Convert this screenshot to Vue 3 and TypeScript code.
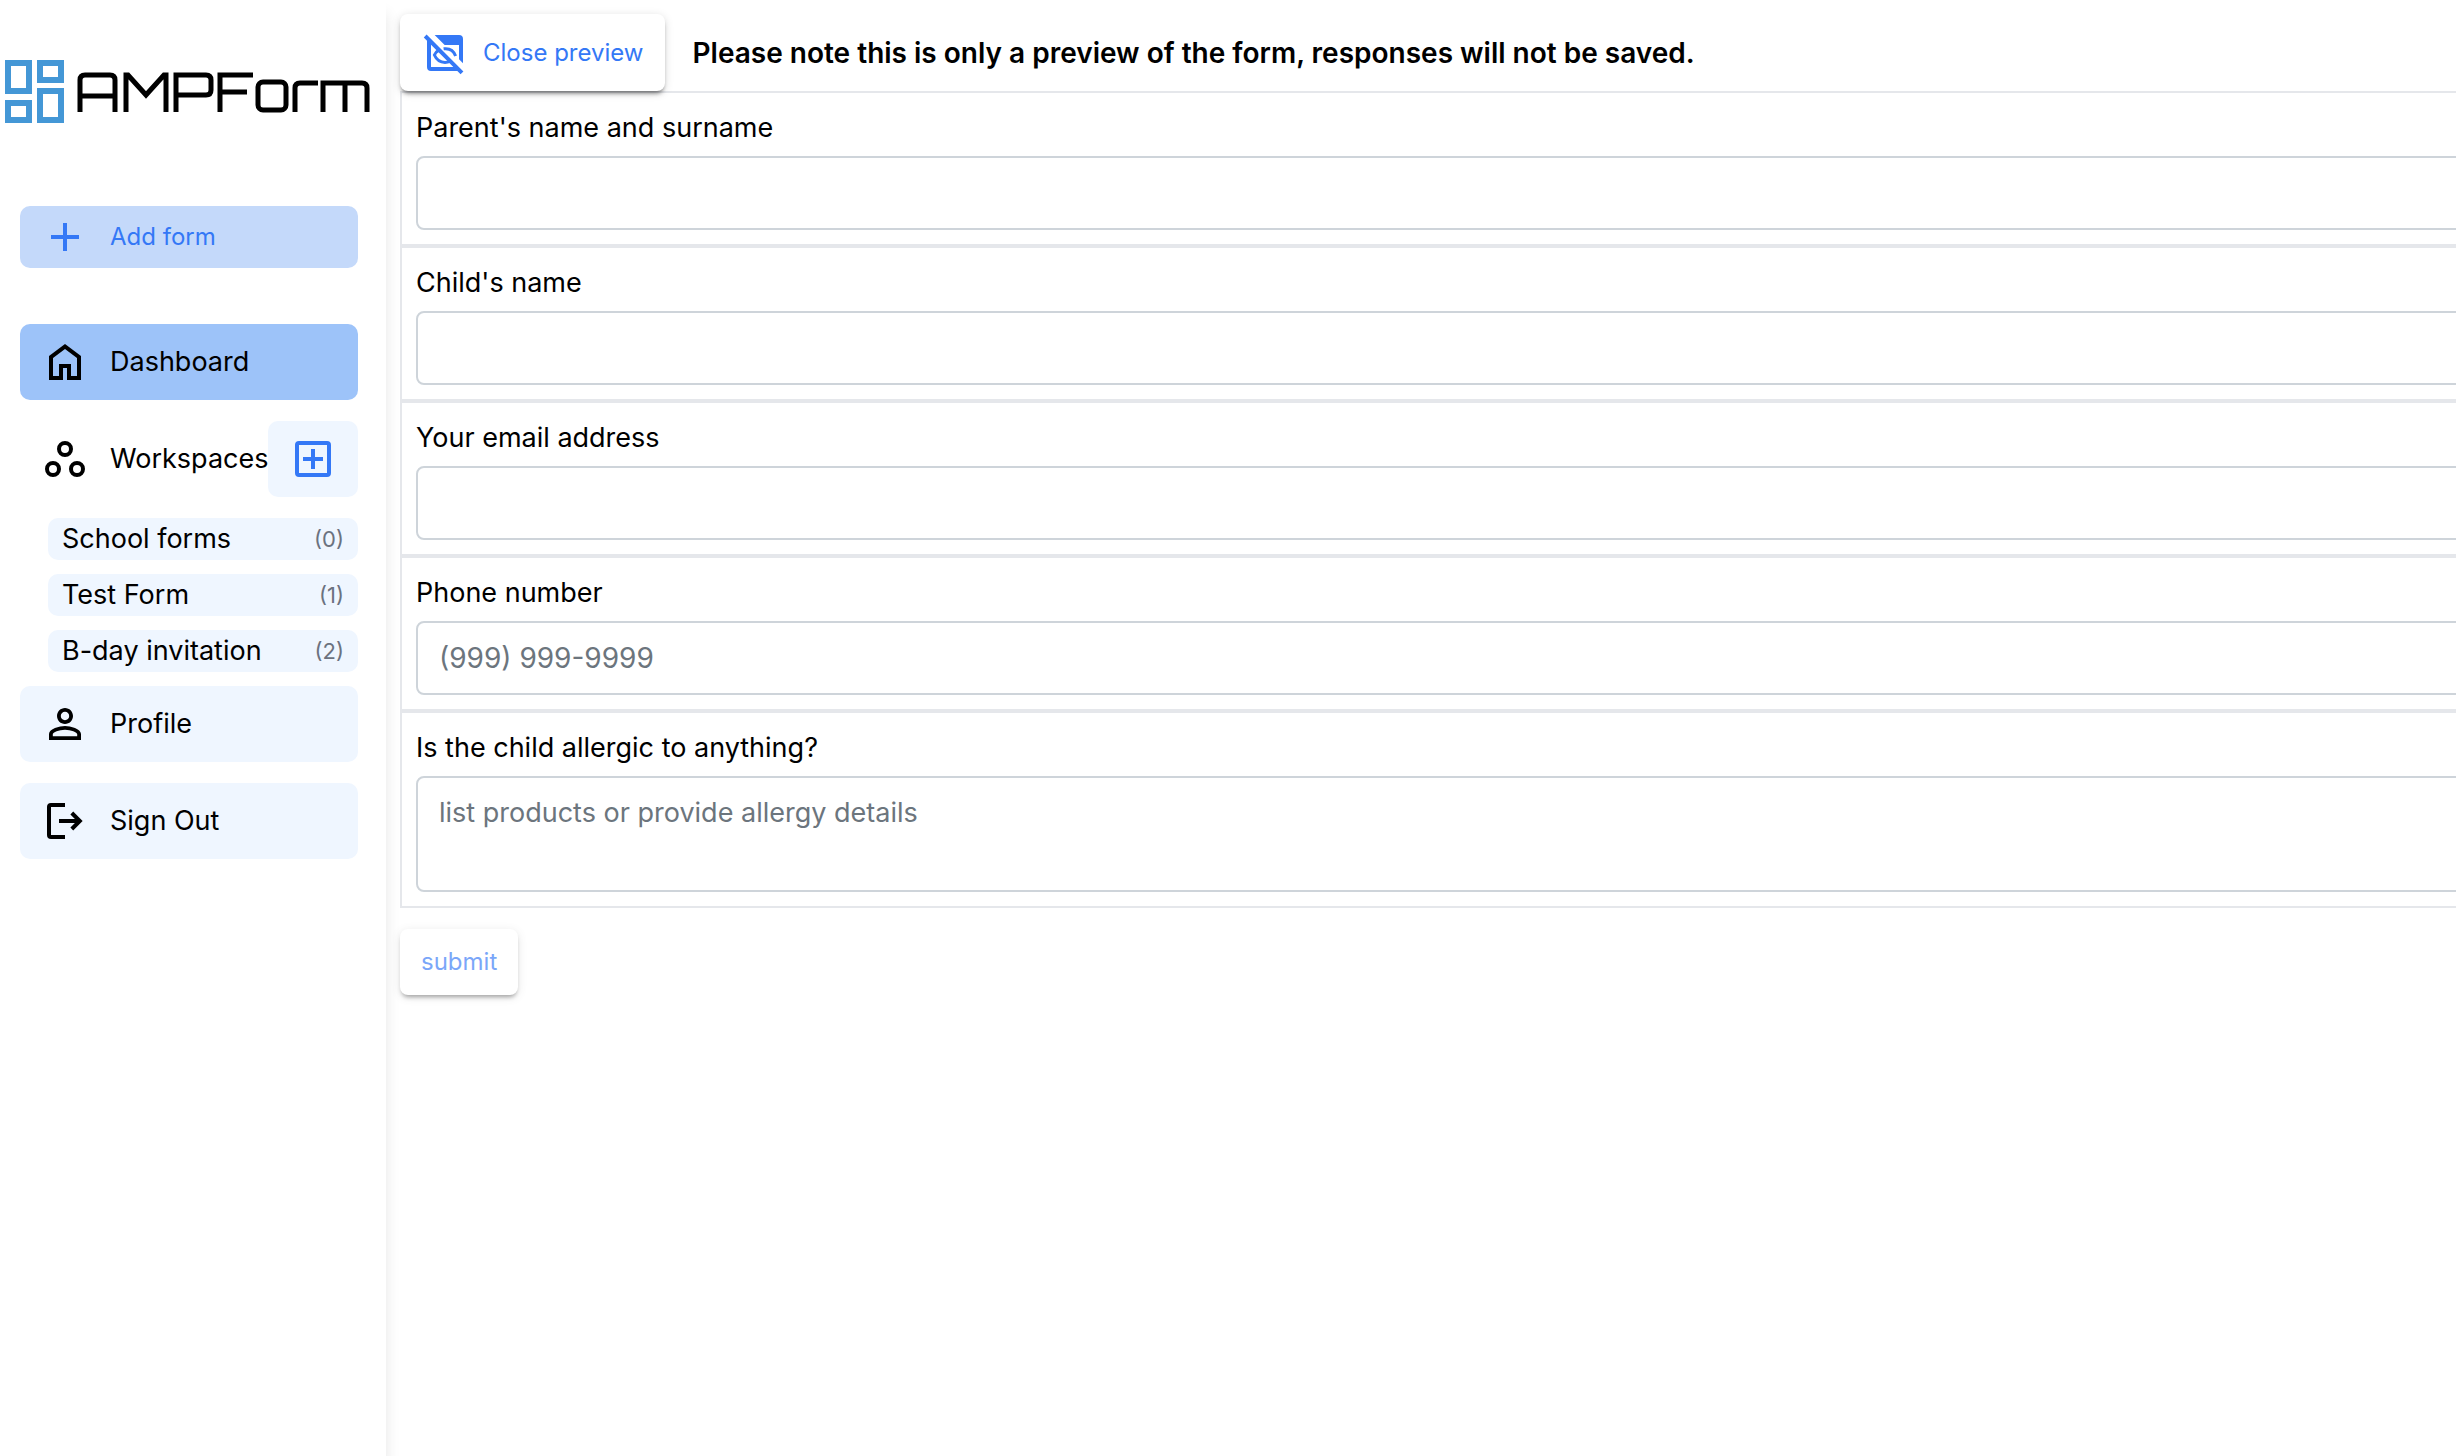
<script setup lang="ts">
import { ref } from 'vue'

interface Workspace {
  name: string
  count: number
}
interface Field {
  id: string
  label: string
  kind: 'text' | 'email' | 'tel' | 'textarea'
  placeholder?: string
}

const workspaces: Workspace[] = [
  { name: 'School forms', count: 0 },
  { name: 'Test Form', count: 1 },
  { name: 'B-day invitation', count: 2 },
]

const fields: Field[] = [
  { id: 'parent', label: "Parent's name and surname", kind: 'text' },
  { id: 'child', label: "Child's name", kind: 'text' },
  { id: 'email', label: 'Your email address', kind: 'email' },
  { id: 'phone', label: 'Phone number', kind: 'tel', placeholder: '(999) 999-9999' },
  {
    id: 'allergy',
    label: 'Is the child allergic to anything?',
    kind: 'textarea',
    placeholder: 'list products or provide allergy details',
  },
]

const answers = ref<Record<string, string>>({})
</script>

<template>
  <div class="app">
    <aside class="sidebar">
      <a class="logo" href="#" aria-label="AMPForm">
        <svg viewBox="0 0 374 64" fill="none">
          <g stroke="#4497d6" stroke-width="6">
            <path d="M8 3h21v28H8zM40 3h21v17H40zM8 43h21v17H8zM40 31h21v29H40z" />
          </g>
          <g stroke="#000" stroke-width="5">
            <path d="M80 52V20q0-5 5-5h25q5 0 5 5v32M80 36h35" />
            <path d="M126 52V15h2l18 20 18-20h2v37" />
            <path d="M176 52V15h30q5 0 5 5v10q0 5-5 5h-30" />
            <path d="M253 15h-33v37M220 32h27" />
            <rect x="258" y="22" width="28" height="28" rx="5" />
            <path d="M295 52V28q0-5 5-5h18" />
            <path d="M323 52V23h39q5 0 5 5v24M345 23v29" />
          </g>
        </svg>
      </a>

      <button class="item add" type="button">
        <svg class="icon" viewBox="0 0 24 24"><path d="M19 13h-6v6h-2v-6H5v-2h6V5h2v6h6z" /></svg>
        <span>Add form</span>
      </button>

      <nav class="nav">
        <a class="item active" href="#">
          <svg class="icon" viewBox="0 0 24 24">
            <path d="M6 19h3v-6h6v6h3v-9l-6-4.5L6 10zm-2 2V9l8-6 8 6v12h-7v-6h-2v6z" />
          </svg>
          <span>Dashboard</span>
        </a>
        <div class="spaces">
          <div class="spaces-head">
            <svg class="icon line" viewBox="0 0 24 24">
              <circle cx="12" cy="7" r="3" /><circle cx="6" cy="17" r="3" /><circle cx="18" cy="17" r="3" />
            </svg>
            <span class="spaces-title">Workspaces</span>
            <button class="plus" type="button" aria-label="Add workspace">
              <svg class="icon line" viewBox="0 0 24 24">
                <rect x="4" y="4" width="16" height="16" rx="1" /><path d="M12 7v10M7 12h10" />
              </svg>
            </button>
          </div>
          <ul class="sub">
            <li v-for="w in workspaces" :key="w.name">
              <a class="sub-item" href="#">
                <span>{{ w.name }}</span>
                <span class="count">({{ w.count }})</span>
              </a>
            </li>
          </ul>
        </div>
        <a class="item" href="#">
          <svg class="icon" viewBox="0 0 24 24">
            <path
              d="M12 5.9c1.16 0 2.1.94 2.1 2.1s-.94 2.1-2.1 2.1S9.9 9.16 9.9 8s.94-2.1 2.1-2.1m0 9c2.97 0 6.1 1.46 6.1 2.1v1.1H5.9V17c0-.64 3.13-2.1 6.1-2.1M12 4C9.79 4 8 5.79 8 8s1.79 4 4 4 4-1.79 4-4-1.79-4-4-4zm0 9c-2.67 0-8 1.34-8 4v3h16v-3c0-2.66-5.33-4-8-4z"
            />
          </svg>
          <span>Profile</span>
        </a>
        <a class="item signout" href="#">
          <svg class="icon line" viewBox="0 0 24 24">
            <path d="M12 4H5a1 1 0 0 0-1 1v14a1 1 0 0 0 1 1h7M9 12h10M15.4 8l4 4-4 4" />
          </svg>
          <span>Sign Out</span>
        </a>
      </nav>
    </aside>

    <main class="main">
      <header class="top">
        <button class="raised close" type="button">
          <svg class="icon" viewBox="0 0 24 24">
            <path
              d="M6.83 3H19a2 2 0 0 1 2 2v12.17l-2-2V8h-7.17zM1.39 4.22 2.8 2.81 21.19 21.19 19.78 22.6 18.17 21H5a2 2 0 0 1-2-2V5.83zM5 7.83V19h11.17z"
            />
            <path
              d="M8.600 10.800Q7.200 11.600 6.700 13q1.600 3.700 5.300 3.700 1.400 0 2.500-.5M11.300 9.900q4.500-.6 6 3.600"
              fill="none"
              stroke="currentColor"
              stroke-width="1.500"
            />
          </svg>
          <span>Close preview</span>
        </button>
        <strong class="notice">Please note this is only a preview of the form, responses will not be saved.</strong>
      </header>

      <form class="form" @submit.prevent>
        <div v-for="f in fields" :key="f.id" class="field">
          <label :for="f.id">{{ f.label }}</label>
          <textarea v-if="f.kind === 'textarea'" :id="f.id" v-model="answers[f.id]" :placeholder="f.placeholder" rows="2"></textarea>
          <input v-else :id="f.id" v-model="answers[f.id]" :type="f.kind" :placeholder="f.placeholder" />
        </div>
        <button class="raised submit" type="submit" disabled>submit</button>
      </form>
    </main>
  </div>
</template>

<style>
body {
  background: #fff;
}
</style>

<style scoped>
.app,
.app * {
  box-sizing: border-box;
}
.app {
  display: flex;
  min-height: 100vh;
  overflow: hidden;
  font-family: Inter, "Liberation Sans", sans-serif;
  font-size: 27px;
  line-height: 42px;
  color: #000;
}
button,
input,
textarea {
  font: inherit;
  color: inherit;
}
button {
  border: 0;
  cursor: pointer;
}
a {
  color: inherit;
  text-decoration: none;
}
.icon {
  flex: none;
  display: block;
  width: 48px;
  height: 48px;
  fill: currentColor;
}
.icon.line {
  fill: none;
  stroke: currentColor;
  stroke-width: 2;
}

.sidebar {
  flex: none;
  width: 386px;
  box-shadow: 0 14px 14px rgba(0, 0, 0, 0.1);
}
.logo {
  display: block;
  margin-top: 60px;
}
.logo svg {
  display: block;
  width: 374px;
  height: 64px;
}
.item {
  display: flex;
  align-items: center;
  gap: 21px;
  margin: 0 28px 0 20px;
  padding: 14px 21px;
  border-radius: 10px;
  background: #eff6ff;
}
.add {
  width: 338px;
  margin-top: 82px;
  padding: 7px 21px;
  background: #c4d9fa;
  color: #3478f6;
  font-size: 24px;
}
.nav {
  margin-top: 56px;
}
.active {
  background: #9dc3f9;
}
.spaces {
  margin: 21px 28px 14px 20px;
}
.spaces-head {
  display: flex;
  align-items: center;
  padding-left: 21px;
}
.spaces-title {
  flex: 1;
  margin-left: 21px;
}
.plus {
  padding: 14px 21px;
  border-radius: 10px;
  background: #eff6ff;
  color: #3478f6;
}
.sub {
  display: grid;
  gap: 14px;
  margin: 21px 0 0 28px;
  padding: 0;
  list-style: none;
}
.sub-item {
  display: flex;
  justify-content: space-between;
  padding: 0 14px;
  border-radius: 10px;
  background: #eff6ff;
}
.count {
  font-size: 22px;
  color: #6b7280;
}
.signout {
  margin-top: 21px;
}

.main {
  flex: 1;
  min-width: 0;
  padding: 14px 0 0 14px;
}
.top {
  display: flex;
  align-items: center;
  gap: 28px;
}
.raised {
  border-radius: 8px;
  background: #fff;
  color: #3478f6;
  font-size: 24px;
  box-shadow: 0 4px 4px -2px rgba(0, 0, 0, 0.5), 0 2px 10px rgba(0, 0, 0, 0.14);
}
.close {
  position: relative;
  display: flex;
  align-items: center;
  gap: 14px;
  min-height: 77px;
  padding: 14px 21px;
}
.notice {
  font-size: 28px;
  font-weight: 600;
}
.form {
  width: calc(100% + 30px);
}
.field {
  padding: 14px;
  border: 2px solid #e5e7eb;
}
.field label {
  display: block;
  margin-bottom: 7px;
}
.field input,
.field textarea {
  display: block;
  width: 100%;
  padding: 14px 21px;
  border: 2px solid #ced4da;
  border-radius: 8px;
  background: #fff;
  outline: 0;
  resize: none;
}
.field input {
  font-size: 28px;
}
.field ::placeholder {
  color: #6c757d;
  opacity: 1;
}
.submit {
  margin-top: 21px;
  padding: 12px 21px;
  opacity: 0.65;
}
</style>
